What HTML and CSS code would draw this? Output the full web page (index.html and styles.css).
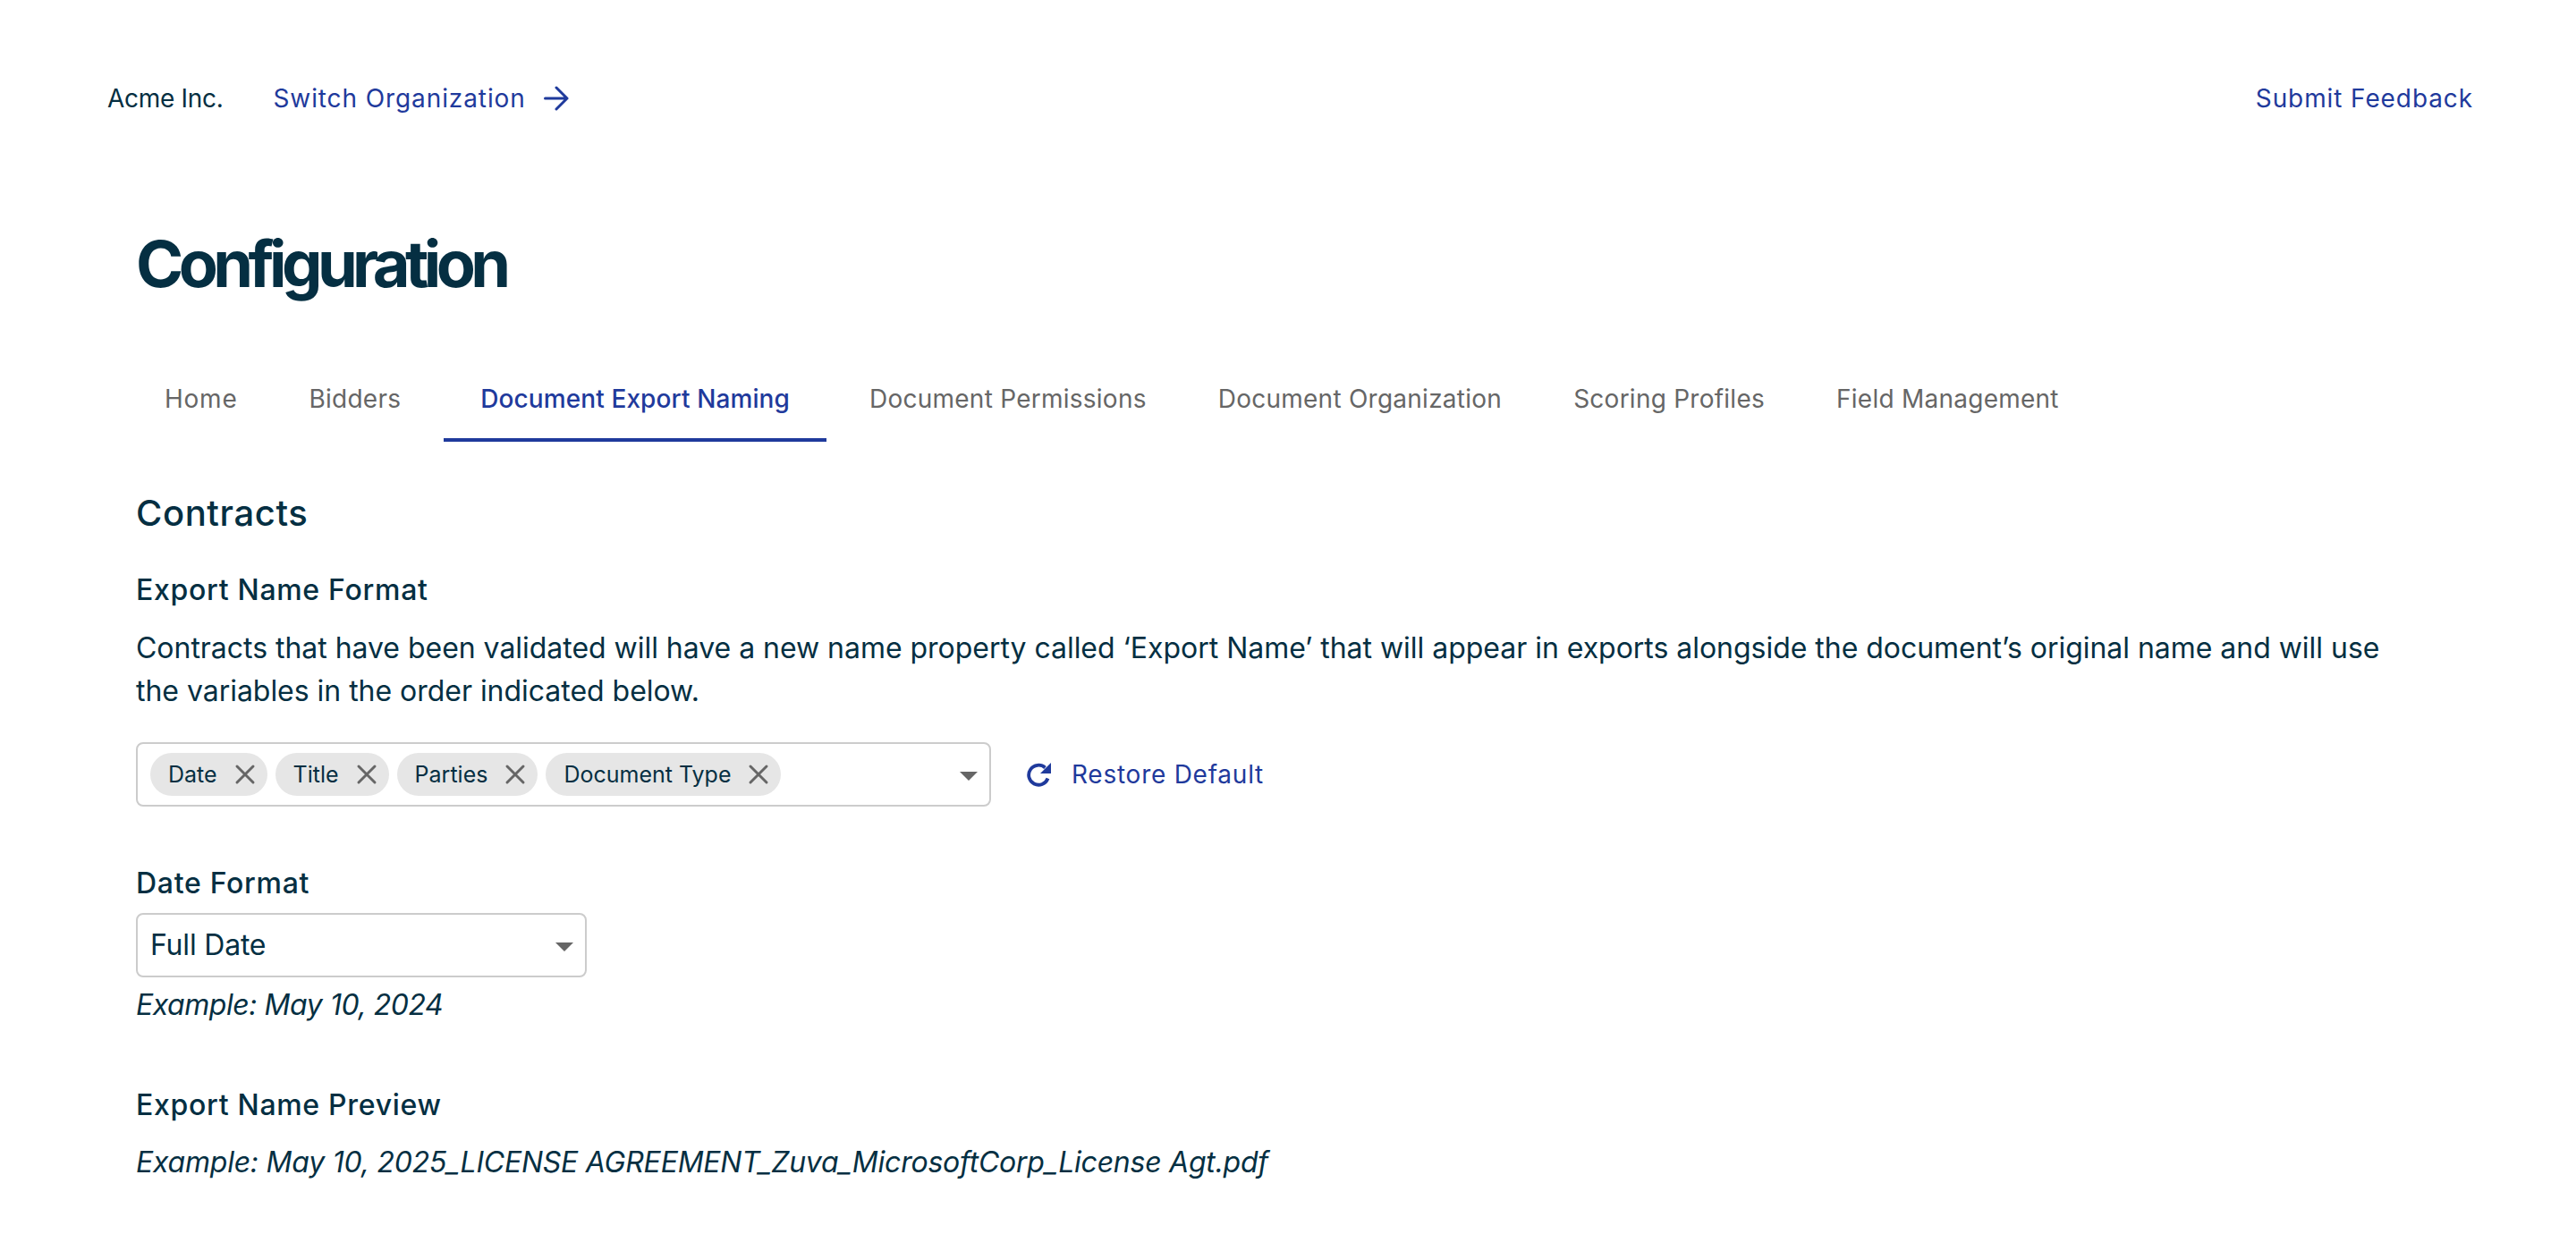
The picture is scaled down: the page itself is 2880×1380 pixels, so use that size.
FILE: index.html
```html
<!DOCTYPE html>
<html lang="en">
<head>
<meta charset="utf-8">
<title>Configuration</title>
<link rel="stylesheet" href="styles.css">
</head>
<body>
<header class="topbar">
  <div class="topbar-left">
    <span class="org">Acme Inc.</span>
    <a class="link switch">Switch Organization
      <svg class="arrow" viewBox="0 0 28 28" width="28" height="28"><path d="M1.500 14H26M14 2L26 14L14 26" fill="none" stroke="currentColor" stroke-width="3" stroke-linecap="round" stroke-linejoin="round"/></svg>
    </a>
  </div>
  <a class="link">Submit Feedback</a>
</header>
<main class="main">
  <h1 class="title">Configuration</h1>
  <nav class="tabs">
    <a class="tab">Home</a>
    <a class="tab">Bidders</a>
    <a class="tab active">Document Export Naming</a>
    <a class="tab">Document Permissions</a>
    <a class="tab">Document Organization</a>
    <a class="tab">Scoring Profiles</a>
    <a class="tab">Field Management</a>
  </nav>
  <h2 class="section">Contracts</h2>
  <h3 class="label first">Export Name Format</h3>
  <p class="desc">Contracts that have been validated will have a new name property called ‘Export Name’ that will appear in exports alongside the document’s original name and will use the variables in the order indicated below.</p>
  <div class="row">
    <div class="field multi">
      <span class="chip">Date<svg class="x" viewBox="0 0 24 24" width="24" height="24"><path d="M3 3L21 21M21 3L3 21"/></svg></span>
      <span class="chip">Title<svg class="x" viewBox="0 0 24 24" width="24" height="24"><path d="M3 3L21 21M21 3L3 21"/></svg></span>
      <span class="chip">Parties<svg class="x" viewBox="0 0 24 24" width="24" height="24"><path d="M3 3L21 21M21 3L3 21"/></svg></span>
      <span class="chip">Document Type<svg class="x" viewBox="0 0 24 24" width="24" height="24"><path d="M3 3L21 21M21 3L3 21"/></svg></span>
      <span class="caret"></span>
    </div>
    <a class="link restore">
      <svg class="refresh" viewBox="0 0 28 28" width="28" height="28"><path d="M23.500 18.500A11 11 0 1 1 20.500 6.500" fill="none" stroke="currentColor" stroke-width="3.800"/><path d="M27 1V13H15Z" fill="currentColor"/></svg>
      Restore Default
    </a>
  </div>
  <h3 class="label date">Date Format</h3>
  <div class="field single">Full Date<span class="caret"></span></div>
  <p class="example ex1">Example: May 10, 2024</p>
  <h3 class="label preview">Export Name Preview</h3>
  <p class="example ex2">Example: May 10, 2025_LICENSE AGREEMENT_Zuva_MicrosoftCorp_License Agt.pdf</p>
</main>
</body>
</html>
```
FILE: styles.css
```css
* { box-sizing: border-box; }
html, body { margin: 0; background: #fff; }
body { font-family: "Inter", "Liberation Sans", sans-serif; color: #052f42; height: 1380px; overflow: hidden; }
.topbar { display: flex; justify-content: space-between; align-items: center; height: 44px; margin-top: 88px; padding: 0 115px 0 120px; font-size: 28px; letter-spacing: 0.9px; }
.org { letter-spacing: -0.3px; }
.topbar-left { display: flex; align-items: center; gap: 56px; }
.link { color: #1f3a9c; display: inline-flex; align-items: center; }
.switch { gap: 20px; }
.arrow { flex: none; }
.main { padding: 0 152px; }
.title { margin: 121px 0 0; height: 84px; line-height: 84px; font-size: 72px; font-weight: 700; letter-spacing: -5.6px; color: #052f42; }
.tabs { display: flex; margin-top: 75px; height: 82px; }
.tab { padding: 0 40px; height: 82px; line-height: 68px; font-size: 28px; color: #666; letter-spacing: 0.25px; }
.tabs .tab:first-child { margin-left: -8px; letter-spacing: 0.75px; }
.tab.active { color: #1f3a9c; border-bottom: 4px solid #1f3a9c; margin: 0 8px; padding: 0 41px; font-weight: 500; letter-spacing: 0.1px; }
.section { margin: 56px 0 0; font-size: 40px; line-height: 48px; font-weight: 500; letter-spacing: 0.6px; }
.label { margin: 0; font-size: 32px; line-height: 40px; font-weight: 500; letter-spacing: 0.7px; }
.label.first { margin-top: 42px; }
.desc { margin: 21px 0 0; font-size: 32px; line-height: 48px; width: 2560px; letter-spacing: -0.03px; }
.row { display: flex; align-items: center; gap: 40px; margin-top: 33px; }
.field { position: relative; display: flex; align-items: center; border: 2px solid #ccc; border-radius: 8px; height: 72px; background: #fff; }
.multi { width: 956px; padding-left: 14px; gap: 9px; }
.chip { display: inline-flex; align-items: center; gap: 19px; height: 48px; padding: 0 13px 0 20px; border-radius: 24px; background: #e6e6e6; font-size: 25px; letter-spacing: 0; }
.x { flex: none; }
.x path { fill: none; stroke: #666; stroke-width: 3; stroke-linecap: round; }
.caret { position: absolute; right: 13px; top: 31px; width: 0; height: 0; border-left: 10px solid transparent; border-right: 10px solid transparent; border-top: 10px solid #666; }
.restore { gap: 22px; font-size: 28px; letter-spacing: 0.75px; }
.refresh { flex: none; }
.label.date { margin-top: 66px; }
.single { width: 504px; margin-top: 13px; padding: 0 0 2px 14px; font-size: 32px; letter-spacing: -0.2px; }
.example { margin: 0; font-size: 32px; line-height: 40px; font-style: italic; letter-spacing: -0.45px; }
.ex1 { margin-top: 11px; }
.label.preview { margin-top: 72px; }
.ex2 { margin-top: 24px; letter-spacing: -0.23px; }
```
